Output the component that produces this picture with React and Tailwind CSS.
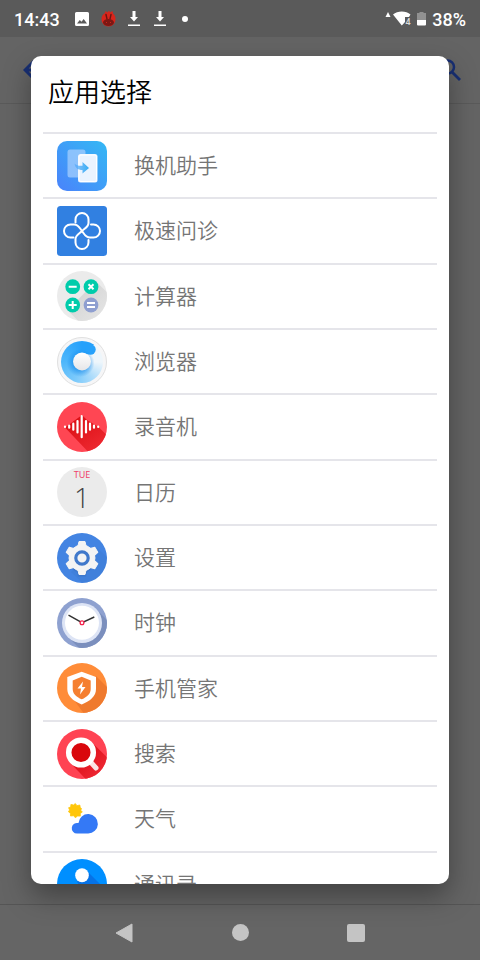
import React from 'react';

function TransferIcon() {
  return (
    <svg viewBox="0 0 50 50" className="size-full">
      <defs>
        <linearGradient id="transferBg" x1="0" y1="1" x2="1" y2="0">
          <stop offset="0" stopColor="#4a83fb" />
          <stop offset="1" stopColor="#34b8f4" />
        </linearGradient>
        <linearGradient id="transferArrow" x1="0" y1="0" x2="1" y2="0">
          <stop offset="0" stopColor="#4fa5fa" stopOpacity="0.6" />
          <stop offset="1" stopColor="#35adf3" />
        </linearGradient>
      </defs>
      <rect width="50" height="50" rx="10" fill="url(#transferBg)" />
      <rect x="10.5" y="8.5" width="18" height="28" rx="2.5" fill="#a6cdfd" fillOpacity="0.75" />
      <rect x="21" y="13" width="19.5" height="28.5" rx="2.5" fill="#eaf3ff" />
      <rect x="22" y="14" width="17.5" height="26.5" rx="2" fill="none" stroke="#fff" />
      <path d="M17.5 22.500c2 2 4.500 2.500 8 2.200V21l6.500 6-6.500 5.500v-3.500c-4.500 0-7.500-2-8-6.500z" fill="url(#transferArrow)" />
    </svg>
  );
}

function ClinicIcon() {
  return (
    <svg viewBox="0 0 50 50" className="size-full">
      <rect width="50" height="50" rx="3.500" fill="#3180e1" />
      <g fill="none" stroke="#fff" strokeWidth="2" strokeLinecap="round">
        <path d="M16.500 31.500H13.500a6.500 6.500 0 0 1 0-13H17c4.500 0 6 4 8 6.500s3.500 6.500 8 6.500h3.500a6.500 6.500 0 0 0 0-13H34" />
        <path d="M18.500 16.500v-3a6.500 6.500 0 0 1 13 0V17c0 4-4 5.500-6.500 8s-6.500 4-6.500 8v3.500a6.500 6.500 0 0 0 13 0V34" />
      </g>
    </svg>
  );
}

function CalculatorIcon() {
  return (
    <svg viewBox="0 0 50 50" className="size-full">
      <defs>
        <clipPath id="calcClip">
          <circle cx="25" cy="25" r="25" />
        </clipPath>
        <linearGradient id="calcShade" x1="0" y1="0" x2="1" y2="1">
          <stop offset="0" stopColor="#cfcfcf" />
          <stop offset="0.800" stopColor="#e6e6e6" />
        </linearGradient>
      </defs>
      <circle cx="25" cy="25" r="25" fill="#ebebeb" />
      <path d="M10.500 39 39 10.500 60 31 31 60z" fill="url(#calcShade)" clipPath="url(#calcClip)" />
      <circle cx="15.700" cy="15.700" r="7.400" fill="#00ccab" />
      <circle cx="34" cy="15.700" r="7.400" fill="#00ccab" />
      <circle cx="15.700" cy="34" r="7.400" fill="#00ccab" />
      <circle cx="34" cy="34" r="7.400" fill="#8f9fd0" />
      <g stroke="#fff" strokeWidth="2">
        <path d="M11.700 15.700h8M31.500 13.200l5 5M36.500 13.200l-5 5M11.700 34h8M15.700 30v8M30 32h8M30 36h8" />
      </g>
    </svg>
  );
}

function BrowserIcon() {
  return (
    <span className="flex size-full rounded-full border border-[#e0e0e0] bg-[#f6f6f7] p-[3px]">
      <span className="flex-1 rounded-full bg-[conic-gradient(#26a1fb_0deg_34deg,#eef6fb_34deg,#eef6fb_90deg,#a8dafb_150deg,#7ccafb_200deg,#4fb7fb_270deg,#26a1fb_360deg)]">
        <svg viewBox="4 4 42 42" className="size-full">
          <defs>
            <linearGradient id="browserKnob" x1="0" y1="0" x2="0" y2="1">
              <stop offset="0" stopColor="#fff" />
              <stop offset="1" stopColor="#e6e6e8" />
            </linearGradient>
            <radialGradient id="browserGlow">
              <stop offset="0.500" stopColor="#1b8eec" stopOpacity="0.700" />
              <stop offset="1" stopColor="#1b8eec" stopOpacity="0" />
            </radialGradient>
          </defs>
          <circle cx="33.500" cy="12.500" r="5.200" fill="#26a1fb" />
          <circle cx="23.500" cy="26" r="14" fill="url(#browserGlow)" />
          <circle cx="25" cy="24.500" r="9" fill="url(#browserKnob)" />
        </svg>
      </span>
    </span>
  );
}

function RecorderIcon() {
  return (
    <svg viewBox="0 0 50 50" className="size-full">
      <defs>
        <clipPath id="recClip">
          <circle cx="25" cy="25" r="25" />
        </clipPath>
        <linearGradient id="recShade" x1="0" y1="0" x2="0.700" y2="1">
          <stop offset="0" stopColor="#d80a0f" />
          <stop offset="1" stopColor="#f02d35" />
        </linearGradient>
      </defs>
      <circle cx="25" cy="25" r="25" fill="#ff4653" />
      <path d="M8 25.500 25 13l5 5 11 6.500L55 38 36 55z" fill="url(#recShade)" clipPath="url(#recClip)" />
      <g stroke="#fff" strokeWidth="2.200" strokeLinecap="round">
        <path d="M8 24.500v.500M12.200 23.700v2M16.300 21.700v6M20.500 19v11.500M24.700 14.200v21M29 19v11.500M33 21.700v6M37 23.700v2M41.200 24.500v.500" />
      </g>
    </svg>
  );
}

function CalendarIcon() {
  return (
    <span className="flex size-full flex-col items-center rounded-full bg-[#ebebeb]">
      <span className="mt-px font-['Noto_Sans',sans-serif] text-[9px] leading-[14px] font-normal text-[#f0416a]">TUE</span>
      <span className="font-['Open_Sans',sans-serif] text-[28px] leading-[30px] font-light text-[#444]">1</span>
    </span>
  );
}

function SettingsIcon() {
  return (
    <svg viewBox="0 0 50 50" className="size-full">
      <defs>
        <clipPath id="setClip">
          <circle cx="25" cy="25" r="25" />
        </clipPath>
      </defs>
      <circle cx="25" cy="25" r="25" fill="#4384e2" />
      <path d="M14 39 40 15 60 33 36 60z" fill="#3c78cf" fillOpacity="0.350" clipPath="url(#setClip)" />
      <g fill="#3468b8" fillOpacity="0.400">
        <circle cx="25" cy="26.500" r="13.500" />
        <path d="M21 43.500h8l1-5H20z" />
      </g>
      <g fill="#f4f4f4" stroke="#f4f4f4" strokeWidth="1" strokeLinejoin="round">
        <circle cx="25" cy="25" r="13" />
        <path d="M22 8.500h6l1.500 6.500v20L28 41.500h-6L20.500 35V15z" />
        <path d="M22 8.500h6l1.500 6.500v20L28 41.500h-6L20.500 35V15z" transform="rotate(60 25 25)" />
        <path d="M22 8.500h6l1.500 6.500v20L28 41.500h-6L20.500 35V15z" transform="rotate(120 25 25)" />
      </g>
      <circle cx="25" cy="25" r="6.200" fill="#f4f4f4" stroke="#4179cb" strokeWidth="3.200" />
    </svg>
  );
}

function ClockIcon() {
  return (
    <svg viewBox="0 0 50 50" className="size-full">
      <defs>
        <clipPath id="clockClip">
          <circle cx="25" cy="25" r="25" />
        </clipPath>
      </defs>
      <circle cx="25" cy="25" r="25" fill="#8ea1d0" />
      <path d="M11 39 39 11 60 32 32 60z" fill="#7b8fbd" clipPath="url(#clockClip)" />
      <circle cx="25" cy="25" r="20" fill="#dde4f5" />
      <circle cx="25" cy="24.700" r="17" fill="#fff" />
      <path d="M11.500 17.200 25 24.700 37.300 19" fill="none" stroke="#333" strokeWidth="1.400" />
      <circle cx="25" cy="24.700" r="1.900" fill="#fff" stroke="#f5214b" strokeWidth="1.300" />
    </svg>
  );
}

function GuardIcon() {
  return (
    <svg viewBox="0 0 50 50" className="size-full">
      <defs>
        <clipPath id="guardClip">
          <circle cx="25" cy="25" r="25" />
        </clipPath>
      </defs>
      <circle cx="25" cy="25" r="25" fill="#ff8c38" />
      <path d="M17 37 39 13l20 20-26 26z" fill="#ef7a2e" clipPath="url(#guardClip)" />
      <path d="M24.700 8.700 39 14v12c0 7-5.500 12-14.300 15.500C16 38 10.300 33 10.300 26V14z" fill="#fff" />
      <path d="M24.700 13.800 33.700 17.500v8.500c0 4.500-3.500 8-9 10.300-5.500-2.300-9-5.800-9-10.300v-8.500z" fill="#f57f30" />
      <path d="m26 18.500-5.500 7h3.500l-1 6 5.500-7.500h-3.500z" fill="#fff" />
    </svg>
  );
}

function SearchAppIcon() {
  return (
    <svg viewBox="0 0 50 50" className="size-full">
      <defs>
        <clipPath id="searchClip">
          <circle cx="25" cy="25" r="25" />
        </clipPath>
        <linearGradient id="searchShade" x1="0" y1="0" x2="1" y2="1">
          <stop offset="0" stopColor="#d40009" />
          <stop offset="0.700" stopColor="#ef2a36" />
        </linearGradient>
      </defs>
      <circle cx="25" cy="25" r="25" fill="#ff4353" />
      <path d="M13.500 34 34.500 13 60 38 38 60z" fill="url(#searchShade)" clipPath="url(#searchClip)" />
      <path d="m34.500 34 4.500 5" stroke="#fbe3e4" strokeWidth="5" strokeLinecap="round" />
      <circle cx="24" cy="23.500" r="12.300" fill="#d9070c" stroke="#fff" strokeWidth="5.500" />
    </svg>
  );
}

function WeatherIcon() {
  return (
    <svg viewBox="0 0 50 50" className="size-full">
      <path
        d="m18.300 9.500 1.700 2.200 2.800-.700.500 2.800 1.200.700-.700 1.800 1.500 1.800-2 1.200v2.800l-2.700-.100-2.300 1.700-1.600-2-3.200.300-.100-2.700-2-1.600 1.200-1.700-1-2.300 2.100-.600.200-2.600 2.800.500z"
        fill="#ffc60a"
        stroke="#ffc60a"
        strokeWidth="0.800"
      />
      <path d="M20 39.500a5.300 5.300 0 1 1 1.500-10.400A9.700 9.700 0 1 1 31 39.500z" fill="#3479f6" />
    </svg>
  );
}

function ContactsIcon() {
  return (
    <svg viewBox="0 0 50 50" className="size-full">
      <defs>
        <clipPath id="contactClip">
          <circle cx="25" cy="25" r="25" />
        </clipPath>
      </defs>
      <circle cx="25" cy="25" r="25" fill="#008fff" />
      <path d="m29 11 30 30-15 15-24-33z" fill="#0672e6" clipPath="url(#contactClip)" />
      <ellipse cx="25" cy="16.300" rx="6.800" ry="7" fill="#fff" />
      <path d="M11 39c0-8 6-11 14-11s14 3 14 11z" fill="#fff" />
    </svg>
  );
}

const apps = [
  { name: '换机助手', icon: TransferIcon },
  { name: '极速问诊', icon: ClinicIcon },
  { name: '计算器', icon: CalculatorIcon },
  { name: '浏览器', icon: BrowserIcon },
  { name: '录音机', icon: RecorderIcon },
  { name: '日历', icon: CalendarIcon },
  { name: '设置', icon: SettingsIcon },
  { name: '时钟', icon: ClockIcon },
  { name: '手机管家', icon: GuardIcon },
  { name: '搜索', icon: SearchAppIcon },
  { name: '天气', icon: WeatherIcon },
  { name: '通讯录', icon: ContactsIcon },
];

function DownloadIcon() {
  return (
    <svg viewBox="0 0 12 16" className="h-4 w-3">
      <path d="M4.500 0h3v6H10l-4 4.500L2 6h2.500zM0 13.500h12V15H0z" fill="#fff" />
    </svg>
  );
}

function StatusBar() {
  return (
    <div className="flex h-[37px] shrink-0 items-center bg-[#5a5a5a] px-[14px] font-['Roboto',sans-serif] text-lg font-medium text-white">
      <span className="pt-0.5">14:43</span>
      <svg viewBox="0 0 14 14" className="ml-[15px] size-[14px]">
        <path
          d="M1.500 0h11A1.500 1.500 0 0 1 14 1.500v11a1.500 1.500 0 0 1-1.500 1.500h-11A1.500 1.500 0 0 1 0 12.500v-11A1.500 1.500 0 0 1 1.500 0zM2 11.500h10L8.700 7 6.500 9.800 4.800 8z"
          fill="#fff"
          fillRule="evenodd"
        />
      </svg>
      <svg viewBox="0 0 15 17" className="ml-3 h-[17px] w-[15px]">
        <path d="M4 3 4.500 1l2 1.500L8 .500l1 2L11.500 1l.500 2.500a7 7 0 0 1 2.500 6A7 7 0 0 1 .500 9.500 7 7 0 0 1 4 3z" fill="#d8251c" />
        <path d="M5 4.500 6 9M10 4.500 9 9" stroke="#6b1512" strokeWidth="1.400" strokeLinecap="round" />
        <ellipse cx="7.500" cy="12.500" rx="5.500" ry="3.500" fill="#7d1713" />
        <path d="M5.500 12v1M9.500 12v1" stroke="#c9241c" strokeWidth="1" />
      </svg>
      <span className="ml-3 flex gap-[14px]">
        <DownloadIcon />
        <DownloadIcon />
      </span>
      <span className="ml-4 size-[6px] rounded-full bg-white" />

      <svg viewBox="0 0 28 17" className="ml-auto h-[17px] w-7">
        <path d="M3 2 5.500 7H.500z" fill="#fff" />
        <path d="M8 4.500C12.500.500 21 .500 25.500 4.500L24 7h-4v5l-3.200 3.500z" fill="#fff" />
        <text x="20.500" y="14.500" fontSize="9" fill="#ddd">4</text>
      </svg>
      <svg viewBox="0 0 9 15" className="ml-1 h-[15px] w-[9px]">
        <path d="M2.500 1h4v1H9v7H0V2h2.500z" fill="#919191" />
        <path d="M0 9h9v4.500a1 1 0 0 1-1 1H1a1 1 0 0 1-1-1z" fill="#fff" />
      </svg>
      <span className="ml-[6px] pt-0.5">38%</span>
    </div>
  );
}

function AppBar() {
  return (
    <header className="flex h-[67px] shrink-0 items-center justify-between border-b border-[#5a5a5a] px-[18px] text-[#182f73]">
      <button type="button" aria-label="返回">
        <svg viewBox="0 0 24 24" className="ml-[5px] size-6">
          <path d="M11 3 2 12l9 9M3 12h18" fill="none" stroke="currentColor" strokeWidth="3" />
        </svg>
      </button>
      <button type="button" aria-label="搜索">
        <svg viewBox="0 0 24 24" className="size-6">
          <circle cx="9.500" cy="9" r="6.500" fill="none" stroke="currentColor" strokeWidth="2.500" />
          <path d="m14 14 8 8" stroke="currentColor" strokeWidth="2.800" />
        </svg>
      </button>
    </header>
  );
}

function NavBar() {
  return (
    <nav className="flex h-14 shrink-0 items-center justify-between border-t border-[#555] bg-[#656565] px-[115px] text-[#c4c4c4]">
      <button type="button" aria-label="后退">
        <svg viewBox="0 0 18 20" className="h-5 w-[18px]">
          <path d="M17 1v18L1 10z" fill="currentColor" stroke="currentColor" strokeLinejoin="round" />
        </svg>
      </button>
      <button type="button" aria-label="主页" className="size-[17px] rounded-full bg-current" />
      <button type="button" aria-label="最近任务" className="size-[18px] rounded-xs bg-current" />
    </nav>
  );
}

function App() {
  return (
    <div className="relative flex h-screen flex-col overflow-hidden bg-[#646464] font-['Noto_Sans_CJK_SC',sans-serif]">
      <StatusBar />
      <AppBar />
      <main className="flex-1" />
      <NavBar />

      {/* Dialog */}
      <div className="absolute inset-0 flex px-[31px] pt-14 pb-[76px]">
        <div
          role="dialog"
          aria-labelledby="dialog-title"
          className="flex flex-1 flex-col overflow-hidden rounded-[10px] bg-white shadow-[0_12px_28px_rgba(0,0,0,0.35)]"
        >
          <h1 id="dialog-title" className="h-[76px] shrink-0 px-[17px] pt-4 text-[26px] leading-[38px] font-[350] text-black">
            应用选择
          </h1>
          <div className="mx-3 min-h-0 flex-1 overflow-y-auto [scrollbar-width:none]">
            <ul className="grid h-[784px] auto-rows-fr">
              {apps.map(({ name, icon: Icon }) => (
                <li key={name} className="border-t-2 border-[#e5e5ea]">
                  <button
                    type="button"
                    className="flex size-full items-center gap-[27px] px-[14px] text-left text-[21px] font-[350] text-[#757575]"
                  >
                    <span className="size-[50px] shrink-0">
                      <Icon />
                    </span>
                    <span className="pb-0.5">{name}</span>
                  </button>
                </li>
              ))}
            </ul>
          </div>
        </div>
      </div>
    </div>
  );
}

export default App;
